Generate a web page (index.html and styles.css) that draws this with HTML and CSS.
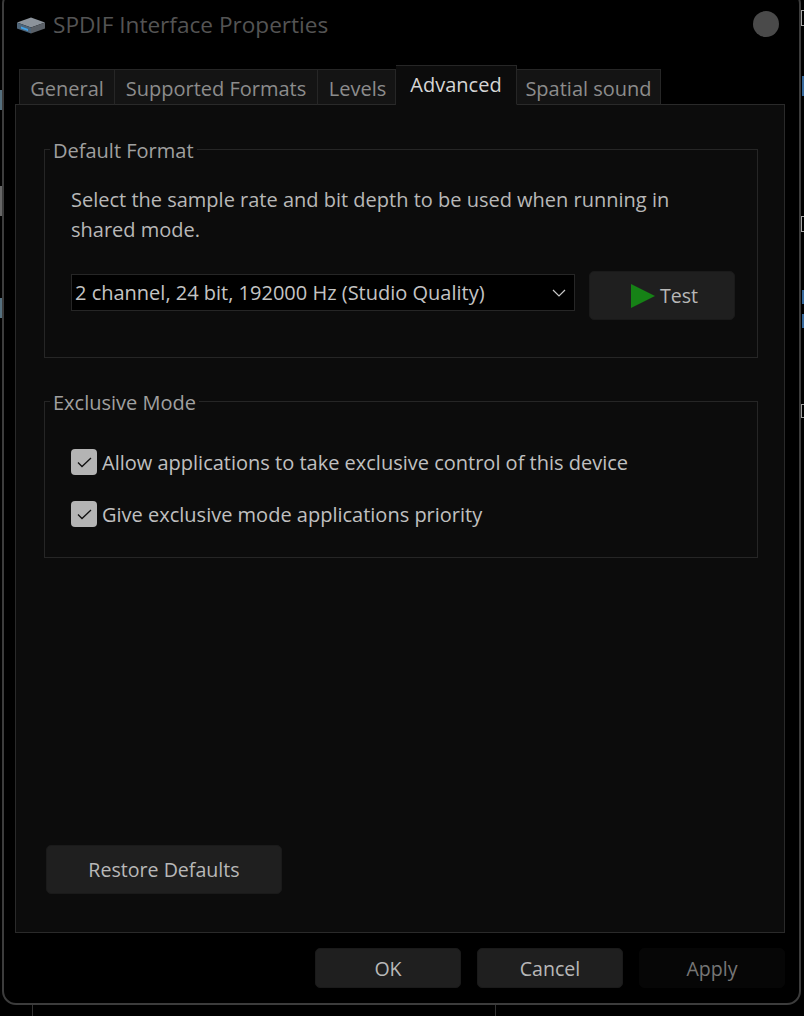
FILE: index.html
```html
<!DOCTYPE html>
<html lang="en">
<head>
<meta charset="utf-8">
<title>SPDIF Interface Properties</title>
<link rel="stylesheet" href="styles.css">
</head>
<body>
<div class="window">
  <header class="titlebar">
    <svg class="device-icon" width="28" height="17" viewBox="0 0 28 17" aria-hidden="true">
      <polygon points="0,5.5 14,0.5 28,5.5 14,10.5" fill="#8c939b"/>
      <polygon points="0,5.5 14,10.5 14,16.5 0,11.5" fill="#4e6478"/>
      <polygon points="14,10.5 28,5.5 28,11.5 14,16.5" fill="#5a6067"/>
      <polygon points="4,9.5 11,12 11,14 4,11.5" fill="#3fa2e8"/>
    </svg>
    <span class="title">SPDIF Interface Properties</span>
    <span class="close"></span>
  </header>
  <nav class="tabs">
    <span class="tab tab-general">General</span>
    <span class="tab tab-formats">Supported Formats</span>
    <span class="tab tab-levels">Levels</span>
    <span class="tab tab-advanced active">Advanced</span>
    <span class="tab tab-spatial">Spatial sound</span>
  </nav>
  <main class="panel">
    <fieldset class="group group-format">
      <legend>Default Format</legend>
      <p class="desc">Select the sample rate and bit depth to be used when running in<br>shared mode.</p>
      <div class="format-row">
        <div class="combo">
          <span>2 channel, 24 bit, 192000 Hz (Studio Quality)</span>
          <svg width="14" height="8" viewBox="0 0 14 8" aria-hidden="true"><path d="M1 1l6 6 6-6" fill="none" stroke="#c8c8c8" stroke-width="1.2"/></svg>
        </div>
        <button class="btn btn-test">
          <svg width="24" height="24" viewBox="0 0 24 24" aria-hidden="true"><polygon points="0,0 24,12 0,24" fill="#168216"/></svg>
          <span>Test</span>
        </button>
      </div>
    </fieldset>
    <fieldset class="group group-exclusive">
      <legend>Exclusive Mode</legend>
      <label class="check">
        <span class="box"><svg width="15" height="11" viewBox="0 0 15 11" aria-hidden="true"><path d="M1 5.5l4 4 9-8.5" fill="none" stroke="#111" stroke-width="1.3"/></svg></span>
        Allow applications to take exclusive control of this device
      </label>
      <label class="check">
        <span class="box"><svg width="15" height="11" viewBox="0 0 15 11" aria-hidden="true"><path d="M1 5.5l4 4 9-8.5" fill="none" stroke="#111" stroke-width="1.3"/></svg></span>
        Give exclusive mode applications priority
      </label>
    </fieldset>
    <button class="btn btn-restore">Restore Defaults</button>
  </main>
  <footer class="footer">
    <button class="btn btn-foot">OK</button>
    <button class="btn btn-foot">Cancel</button>
    <button class="btn btn-foot btn-disabled">Apply</button>
  </footer>
</div>
<span class="bit bit-a"></span>
<span class="bit bit-b"></span>
<span class="bit bit-c"></span>
<span class="bit bit-d"></span>
<span class="bit bit-e"></span>
<span class="bit bit-f"></span>
<span class="bit bit-g"></span>
<span class="bit bit-h"></span>
<span class="bit bit-i"></span>
<span class="bit bit-j"></span>
<span class="bit bit-k"></span>
</body>
</html>
```
FILE: styles.css
```css
* { box-sizing: border-box; }
html, body { margin: 0; height: 1016px; overflow: hidden; background: #000; }
body {
  position: relative;
  font-family: "Open Sans", "Noto Sans", sans-serif;
  font-size: 20px;
  color: #c4c4c4;
}
.window {
  width: 799px;
  height: 1015px;
  margin: -10px 0 0 2px;
  border: 2px solid #3c3c3c;
  border-radius: 14px;
  background: #000;
  padding: 10px 13px 0 11px;
  display: flex;
  flex-direction: column;
}
.titlebar {
  height: 64px;
  display: flex;
  align-items: center;
  padding: 0 7px 19px 2px;
  flex: none;
}
.device-icon { margin-right: 8px; margin-top: 1px; }
.title { font-size: 22.6px; color: #545454; flex: 1; }
.close { width: 26px; height: 26px; margin-top: -1px; border-radius: 50%; background: #4a4a4a; }
.tabs {
  display: flex;
  height: 39px;
  padding-left: 4px;
  align-items: flex-end;
  flex: none;
  position: relative;
  z-index: 1;
  margin-bottom: -1px;
}
.tab {
  height: 36px;
  background: #141414;
  border: 1px solid #262626;
  border-bottom: 1px solid #2a2a2a;
  border-left: 0;
  display: flex;
  align-items: center;
  justify-content: center;
  color: #8c8c8c;
  padding-top: 3px;
}
.tab-general { width: 96px; border-left: 1px solid #262626; }
.tab-formats { width: 203px; }
.tab-levels { width: 78px; padding-left: 2px; }
.tab-advanced { width: 121px; }
.tab-spatial { width: 144px; }
.tab.active {
  height: 40px;
  background: #0c0c0c;
  border-bottom-color: #0c0c0c;
  color: #d6d6d6;
  padding-top: 0;
  padding-bottom: 2px;
}
.panel {
  width: 770px;
  height: 829px;
  flex: none;
  background: #0c0c0c;
  border: 1px solid #2a2a2a;
  padding: 29px 26px 38px 28px;
  display: flex;
  flex-direction: column;
}
.group {
  margin: 0;
  border: 1px solid #262626;
  padding: 0 22px 0 26px;
  min-width: 0;
}
.group legend {
  padding: 4px 3px 0;
  margin-left: -21px;
  font-size: 20px;
  line-height: 26px;
  color: #a0a0a0;
}
.group-format { height: 224px; }
.group-exclusive { height: 172px; margin-top: 28px; padding-top: 33px; }
.desc { margin: 21px 0 0; line-height: 30px; color: #b8b8b8; white-space: nowrap; }
.format-row { display: flex; align-items: flex-start; margin-top: 26px; }
.combo {
  flex: none;
  width: 504px;
  height: 37px;
  margin-top: 3px;
  background: #000;
  border: 1px solid #262626;
  display: flex;
  align-items: center;
  justify-content: space-between;
  padding: 0 8px 0 3px;
  color: #c4c4c4;
}
.btn {
  font: inherit;
  font-size: 19.6px;
  color: #b8b8b8;
  background: #1f1f1f;
  border: 1px solid #1a1a1a;
  border-radius: 5px;
  padding: 0;
}
.btn-test {
  flex: none;
  width: 146px;
  height: 49px;
  margin-left: 14px;
  padding-left: 5px;
  display: flex;
  align-items: center;
  justify-content: center;
  gap: 5px;
}
.check { display: flex; align-items: center; gap: 5px; height: 26px; color: #c0c0c0; }
.check + .check { margin-top: 26px; }
.box {
  width: 26px;
  height: 26px;
  border-radius: 4px;
  background: #b4b4b4;
  display: flex;
  align-items: center;
  justify-content: center;
}
.btn-restore { width: 236px; height: 49px; margin-top: auto; margin-left: 2px; }
.footer {
  display: flex;
  justify-content: flex-end;
  gap: 16px;
  margin-top: 15px;
  width: 770px;
  flex: none;
}
.btn-foot { width: 146px; height: 40px; }
.btn-disabled { background: #060606; border-color: #060606; color: #767676; }
.bit { position: absolute; display: block; }
.bit-a { left: 32px; top: 1005px; width: 1px; height: 11px; background: #333; }
.bit-b { left: 495px; top: 1005px; width: 1px; height: 11px; background: #333; }
.bit-c { left: 801px; top: 10px; width: 3px; height: 16px; border: 1px solid #a8a8a8; border-right: 0; }
.bit-d { left: 802px; top: 76px; width: 2px; height: 20px; background: #35689c; }
.bit-e { left: 801px; top: 216px; width: 3px; height: 16px; border: 1px solid #a8a8a8; border-right: 0; }
.bit-f { left: 802px; top: 290px; width: 2px; height: 14px; background: #35689c; }
.bit-g { left: 801px; top: 404px; width: 3px; height: 14px; border: 1px solid #a0a0a0; border-right: 0; }
.bit-h { left: 0; top: 90px; width: 2px; height: 20px; background: #55707f; }
.bit-i { left: 0; top: 186px; width: 2px; height: 30px; background: #666; }
.bit-j { left: 0; top: 298px; width: 2px; height: 20px; background: #55707f; }
.bit-k { left: 802px; top: 314px; width: 2px; height: 14px; background: #35689c; }
```
